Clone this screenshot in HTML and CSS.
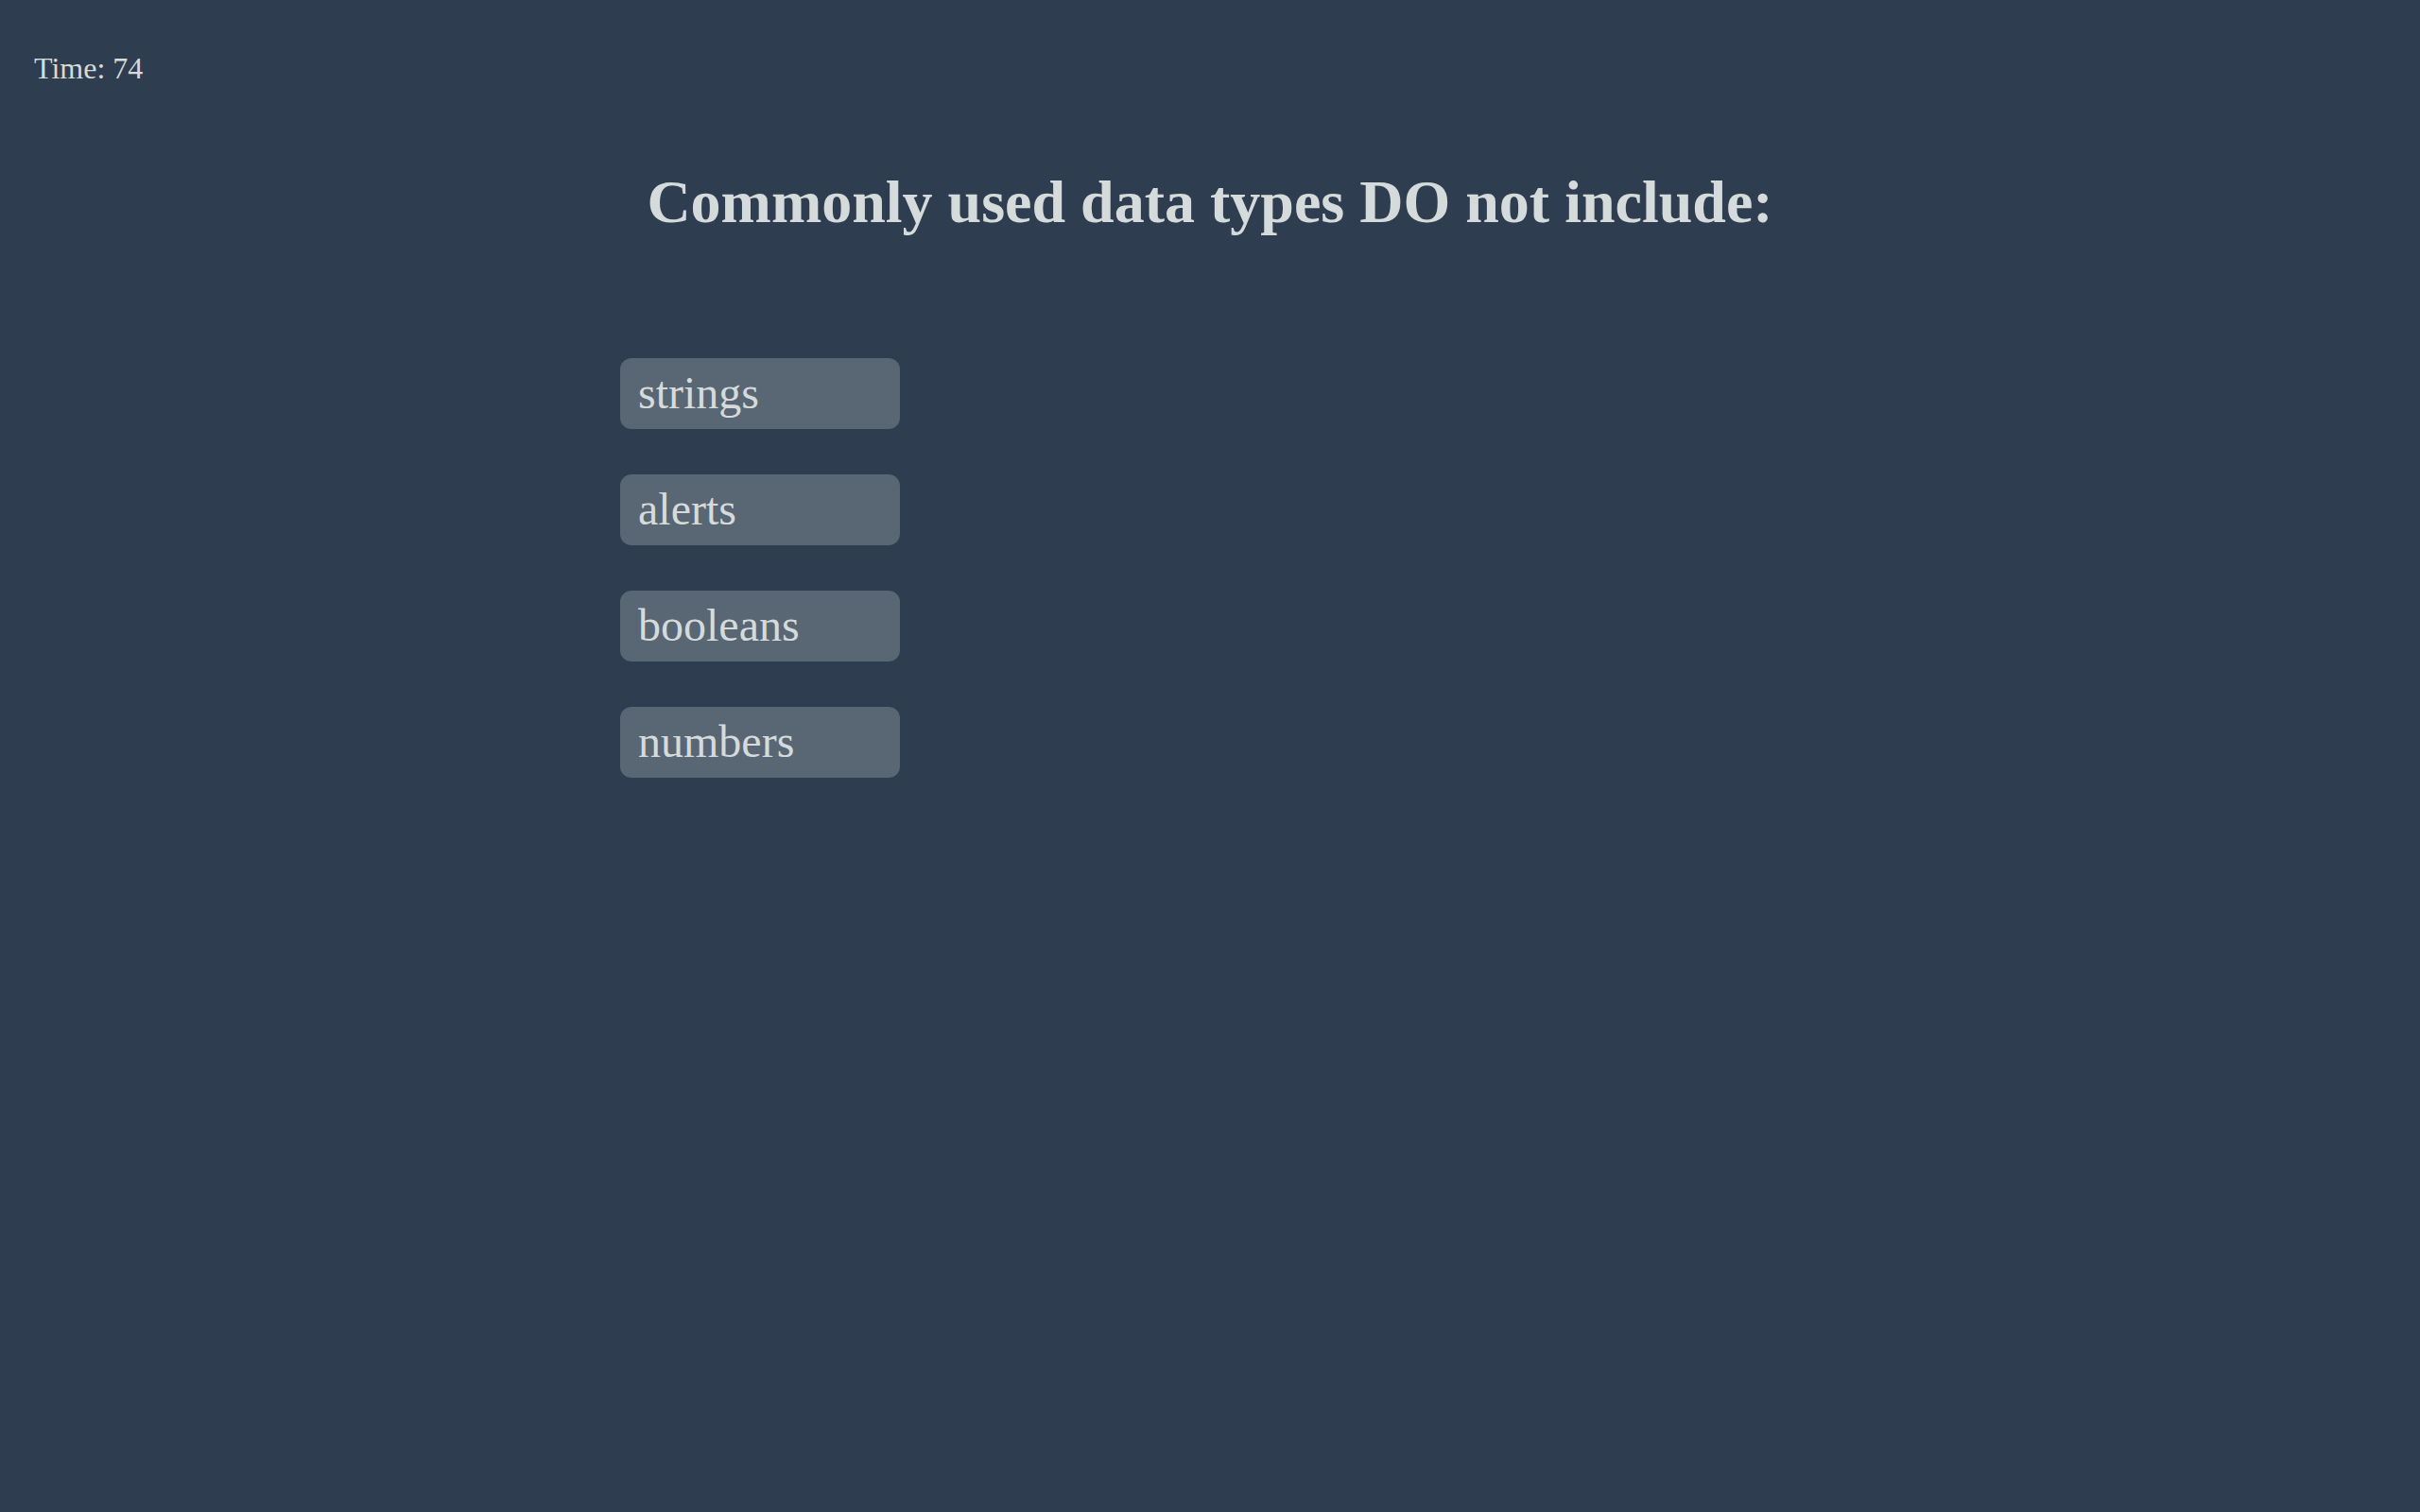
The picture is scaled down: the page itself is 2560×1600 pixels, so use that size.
FILE: index.html
```html
<!DOCTYPE html>
<html>
<head>
<meta charset="utf-8">
<link rel="stylesheet" href="styles.css">
</head>
<body>
<header class="header"><span class="timer">Time: 74</span></header>
<main class="quiz">
  <h1 class="question">Commonly used data types DO not include:</h1>
  <div class="choices">
    <button class="choice">strings</button>
    <button class="choice">alerts</button>
    <button class="choice">booleans</button>
    <button class="choice">numbers</button>
  </div>
</main>
</body>
</html>
```

FILE: styles.css
```css
html, body {
  margin: 0;
  padding: 0;
  background: #2e3e50;
  min-height: 1600px;
}
body {
  font-family: "Liberation Serif", "Times New Roman", serif;
  color: #d5dadb;
}
.header {
  padding: 54px 36px 0;
  height: 62px;
}
.timer {
  font-size: 32px;
  line-height: 1.15;
}
.quiz {
  width: 1248px;
  margin: 0 auto;
  padding: 0 16px;
}
.question {
  margin: 61px -40px 0;
  font-size: 64px;
  font-weight: bold;
  text-align: center;
  line-height: 1.15;
  white-space: nowrap;
}
.choices {
  display: flex;
  flex-direction: column;
  align-items: flex-start;
  gap: 48px;
  margin-top: 128px;
}
.choice {
  width: 296px;
  height: 75px;
  padding: 0 19px 2px;
  border: none;
  border-radius: 12px;
  background: #596674;
  color: #d5dadb;
  font-family: "Liberation Serif", "Times New Roman", serif;
  font-size: 48px;
  line-height: 73px;
  text-align: left;
}
```
